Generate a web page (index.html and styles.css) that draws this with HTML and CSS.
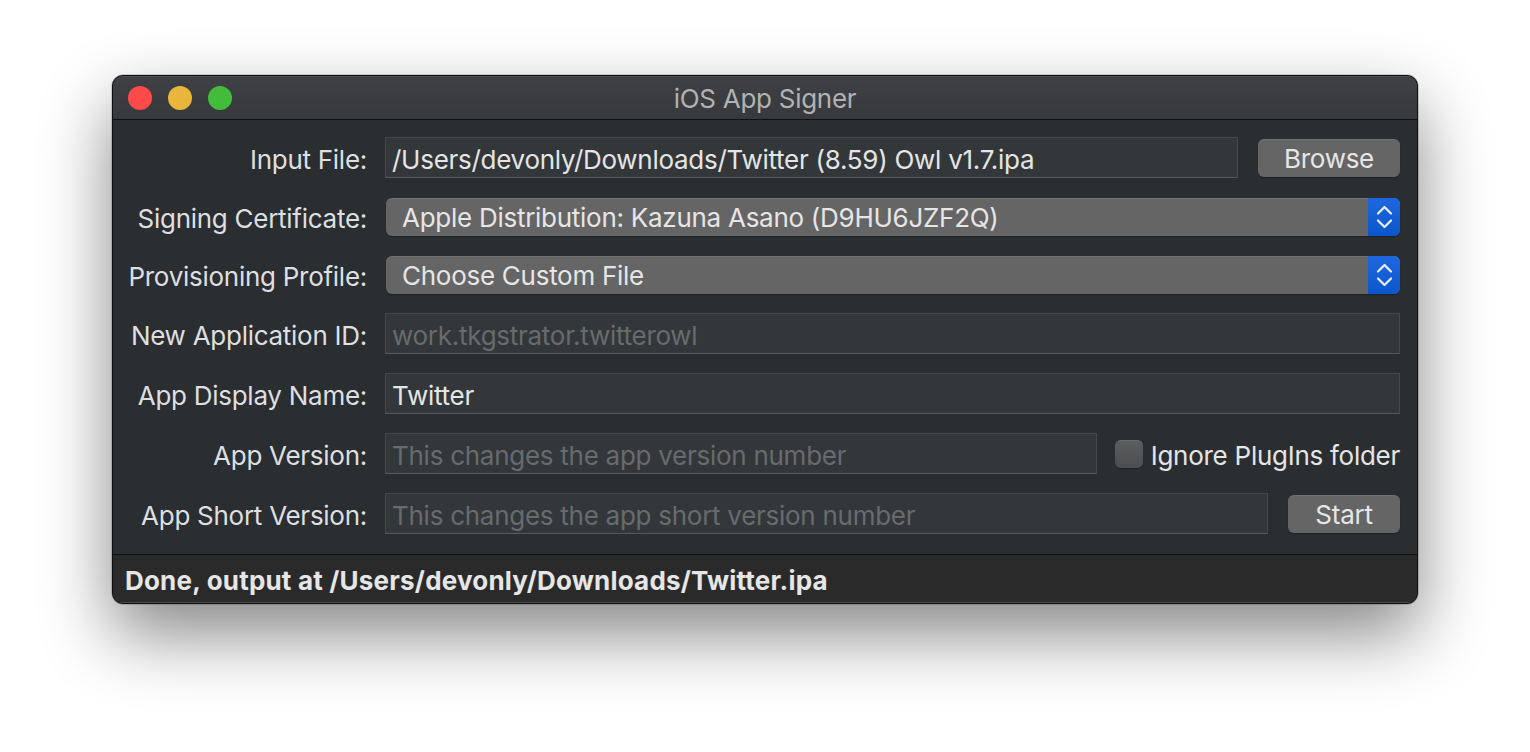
FILE: index.html
```html
<!DOCTYPE html>
<html lang="en">
<head>
<meta charset="utf-8">
<title>iOS App Signer</title>
<link rel="stylesheet" href="styles.css">
</head>
<body>
<div class="stage">
  <div class="window">
    <div class="titlebar">
      <div class="lights">
        <span class="light red"></span>
        <span class="light yellow"></span>
        <span class="light green"></span>
      </div>
      <div class="title">iOS App Signer</div>
      <div class="spacer"></div>
    </div>
    <div class="content">
      <div class="label">Input File:</div>
      <div class="ctrl">
        <div class="field grow">/Users/devonly/Downloads/Twitter (8.59) Owl v1.7.ipa</div>
        <div class="button browse">Browse</div>
      </div>

      <div class="label">Signing Certificate:</div>
      <div class="ctrl">
        <div class="popup">
          <span class="popup-text">Apple Distribution: Kazuna Asano (D9HU6JZF2Q)</span>
          <span class="stepper"><svg width="32" height="38" viewBox="0 0 32 38"><path d="M10 15.5 L16.5 9 L23 15.5 M10 22.5 L16.5 29 L23 22.5" fill="none" stroke="#e9effb" stroke-width="2.2" stroke-linecap="round" stroke-linejoin="round"/></svg></span>
        </div>
      </div>

      <div class="label">Provisioning Profile:</div>
      <div class="ctrl">
        <div class="popup">
          <span class="popup-text">Choose Custom File</span>
          <span class="stepper"><svg width="32" height="38" viewBox="0 0 32 38"><path d="M10 15.5 L16.5 9 L23 15.5 M10 22.5 L16.5 29 L23 22.5" fill="none" stroke="#e9effb" stroke-width="2.2" stroke-linecap="round" stroke-linejoin="round"/></svg></span>
        </div>
      </div>

      <div class="label">New Application ID:</div>
      <div class="ctrl">
        <div class="field grow placeholder">work.tkgstrator.twitterowl</div>
      </div>

      <div class="label">App Display Name:</div>
      <div class="ctrl">
        <div class="field grow">Twitter</div>
      </div>

      <div class="label">App Version:</div>
      <div class="ctrl">
        <div class="field grow placeholder">This changes the app version number</div>
        <label class="check"><span class="box"></span><span class="check-text">Ignore PlugIns folder</span></label>
      </div>

      <div class="label">App Short Version:</div>
      <div class="ctrl">
        <div class="field grow placeholder">This changes the app short version number</div>
        <div class="button start">Start</div>
      </div>
    </div>
    <div class="statusbar">Done, output at /Users/devonly/Downloads/Twitter.ipa</div>
  </div>
</div>
</body>
</html>
```
FILE: styles.css
```css
html, body {
  margin: 0;
  padding: 0;
  background: #ffffff;
}
body {
  font-family: Inter, "Noto Sans", "Liberation Sans", sans-serif;
  font-size: 26px;
  letter-spacing: -0.27px;
  -webkit-font-smoothing: antialiased;
}
.stage {
  display: flex;
  justify-content: center;
  align-items: flex-start;
  padding-top: 75px;
  min-height: 752px;
  box-sizing: border-box;
}
.window {
  width: 1306px;
  box-sizing: border-box;
  border: 1px solid #0e0f10;
  border-radius: 11px;
  overflow: hidden;
  background: #2b2e31;
  box-shadow: 0 30px 70px rgba(0, 0, 0, 0.48), 0 0 0 0.5px rgba(0,0,0,0.3);
}
.titlebar {
  height: 43px;
  border-bottom: 1px solid #0f1011;
  background: linear-gradient(#3e4043, #37393c);
  display: grid;
  grid-template-columns: 1fr auto 1fr;
  align-items: center;
  box-shadow: inset 0 1px 0 rgba(255,255,255,0.08);
}
.lights {
  display: flex;
  gap: 16px;
  padding-left: 15px;
}
.light {
  width: 24px;
  height: 24px;
  border-radius: 50%;
  display: block;
}
.red { background: #fe4a4b; }
.yellow { background: #e9b53b; }
.green { background: #43bc3c; }
.title {
  color: #b1b2b3;
  font-size: 26px;
  padding-top: 2px;
}
.content {
  display: grid;
  grid-template-columns: 254px 1fr;
  grid-template-rows: 41px 39px 39px 41px 41px 41px 41px;
  column-gap: 18px;
  row-gap: 19px;
  padding: 17px 17px 20px 0;
}
.label {
  color: #dedfe0;
  text-align: right;
  display: flex;
  align-items: center;
  justify-content: flex-end;
  white-space: nowrap;
  padding-top: 3px;
}
.ctrl {
  display: flex;
  align-items: center;
  min-width: 0;
}
.field {
  height: 41px;
  box-sizing: border-box;
  background: #33373a;
  border: 1px solid #46494c;
  border-bottom-color: #575a5d;
  color: #e4e5e6;
  padding: 3px 6px 0;
  display: flex;
  align-items: center;
  white-space: nowrap;
  overflow: hidden;
}
.grow { flex: 1; min-width: 0; }
.placeholder { color: #686b6e; }
.button {
  height: 38px;
  box-sizing: border-box;
  background: #656565;
  border-radius: 6px;
  color: #e6e6e6;
  display: flex;
  align-items: center;
  justify-content: center;
  padding-top: 2px;
  box-shadow: inset 0 1px 0 rgba(255,255,255,0.08), 0 1px 1px rgba(0,0,0,0.25);
}
.browse {
  width: 142px;
  margin-left: 20px;
}
.start {
  width: 112px;
  margin-left: 20px;
}
.popup {
  flex: 1;
  height: 38px;
  margin-left: 1px;
  border-radius: 6px;
  background: #656565;
  display: flex;
  align-items: center;
  overflow: hidden;
  box-shadow: inset 0 1px 0 rgba(255,255,255,0.08), 0 1px 1px rgba(0,0,0,0.25);
}
.popup-text {
  flex: 1;
  color: #e6e6e6;
  padding-left: 16px;
  padding-top: 2px;
  white-space: nowrap;
}
.stepper {
  width: 32px;
  height: 38px;
  background: linear-gradient(#1f67df, #0b56cc);
  display: flex;
}
.check {
  display: flex;
  align-items: center;
  margin-left: 18px;
  gap: 8px;
  color: #e4e5e6;
  white-space: nowrap;
}
.check-text {
  padding-top: 3px;
}
.box {
  width: 28px;
  height: 28px;
  box-sizing: border-box;
  border-radius: 6px;
  background: linear-gradient(#5c5d5f, #4d4e50);
  box-shadow: inset 0 1px 0 rgba(255,255,255,0.1), 0 1px 1px rgba(0,0,0,0.3);
}
.statusbar {
  height: 49px;
  box-sizing: border-box;
  border-top: 1px solid #0e0f10;
  background: #2a2a2b;
  color: #e6e6e6;
  font-weight: 700;
  letter-spacing: 0.2px;
  display: flex;
  align-items: center;
  padding: 2px 0 0 12px;
  white-space: nowrap;
  box-shadow: inset 0 -1px 0 #4a4a4b;
}
```
